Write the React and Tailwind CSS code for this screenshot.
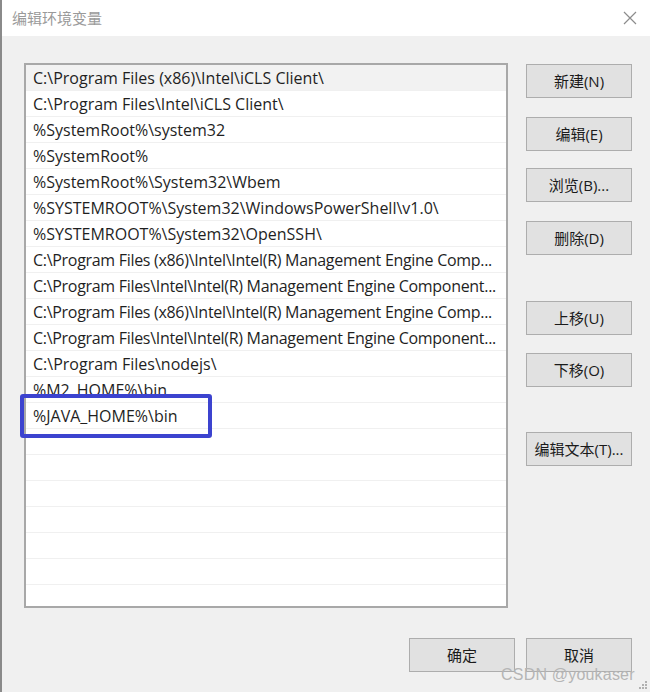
import React from 'react';

const paths = [
  'C:\\Program Files (x86)\\Intel\\iCLS Client\\',
  'C:\\Program Files\\Intel\\iCLS Client\\',
  '%SystemRoot%\\system32',
  '%SystemRoot%',
  '%SystemRoot%\\System32\\Wbem',
  '%SYSTEMROOT%\\System32\\WindowsPowerShell\\v1.0\\',
  '%SYSTEMROOT%\\System32\\OpenSSH\\',
  'C:\\Program Files (x86)\\Intel\\Intel(R) Management Engine Comp...',
  'C:\\Program Files\\Intel\\Intel(R) Management Engine Component...',
  'C:\\Program Files (x86)\\Intel\\Intel(R) Management Engine Comp...',
  'C:\\Program Files\\Intel\\Intel(R) Management Engine Component...',
  'C:\\Program Files\\nodejs\\',
  '%M2_HOME%\\bin',
  '%JAVA_HOME%\\bin',
  '', '', '', '', '', '', '', '',
];

const font = { fontFamily: '"Open Sans", "Noto Sans CJK SC", sans-serif' };

// Windows-style push button
const Btn = ({ label, className = '' }) => (
  <div
    className={`w-[106px] h-[34px] flex items-center justify-center bg-[#e1e1e1] border border-[#adadad] text-[15px] text-[#1a1a1a] ${className}`}
  >
    {label}
  </div>
);

export default function App() {
  return (
    <div className="relative w-[650px] h-[692px] flex flex-col bg-[#f0f0f0] border-l-2 border-[#8a8a8a] overflow-hidden" style={font}>
      {/* title bar */}
      <div className="h-[36px] bg-white flex items-center justify-between pl-[10px] pr-[13px] shrink-0">
        <span className="text-[15px] text-[#9a9a9a]">编辑环境变量</span>
        <svg width="14" height="14" viewBox="0 0 14 14" className="text-[#8c8c8c]">
          <path d="M1 1L13 13M13 1L1 13" stroke="currentColor" strokeWidth="1.2" fill="none" />
        </svg>
      </div>

      <div className="flex-1 flex flex-col pt-[27px] pl-[22px]">
        <div className="flex">
          {/* list */}
          <div className="w-[484px] h-[545px] border-2 border-[#a8a8a8] bg-white overflow-hidden">
            {paths.map((p, i) => (
              <div
                key={i}
                className={`h-[26px] flex items-center pl-[7px] border-b border-[#f0f0f0] text-[16px] text-[#1f1f1f] whitespace-nowrap ${i === 0 ? 'bg-[#f2f2f2]' : ''} ${p.length > 55 ? 'tracking-[-0.3px]' : ''}`}
              >
                {p}
              </div>
            ))}
          </div>

          {/* side buttons */}
          <div className="ml-[18px] flex flex-col pt-[1px]">
            <Btn label="新建(N)" />
            <Btn label="编辑(E)" className="mt-[19px]" />
            <Btn label="浏览(B)..." className="mt-[17px]" />
            <Btn label="删除(D)" className="mt-[19px]" />
            <Btn label="上移(U)" className="mt-[46px]" />
            <Btn label="下移(O)" className="mt-[18px]" />
            <Btn label="编辑文本(T)..." className="mt-[45px]" />
          </div>
        </div>

        <div className="flex justify-end gap-[11px] pr-[18px] mt-[30px]">
          <Btn label="确定" />
          <Btn label="取消" />
        </div>
      </div>

      {/* highlight box drawn over the list */}
      <div className="absolute left-[18px] top-[394px] w-[192px] h-[44px] border-[4px] border-[#3c43cf] rounded-[3px]" />

      {/* watermark */}
      <div className="absolute left-[499px] top-[663px] text-[16px] text-[#b5b5b5] tracking-[0.2px]" style={{ fontFamily: '"Liberation Sans", sans-serif' }}>
        CSDN @youkaser
      </div>

      {/* resize grip */}
      <svg className="absolute right-[2px] bottom-[2px]" width="10" height="10" viewBox="0 0 10 10">
        <g fill="#b0b0b0">
          <rect x="7" y="1" width="2" height="2" />
          <rect x="4" y="4" width="2" height="2" />
          <rect x="7" y="4" width="2" height="2" />
          <rect x="1" y="7" width="2" height="2" />
          <rect x="4" y="7" width="2" height="2" />
          <rect x="7" y="7" width="2" height="2" />
        </g>
      </svg>
    </div>
  );
}
